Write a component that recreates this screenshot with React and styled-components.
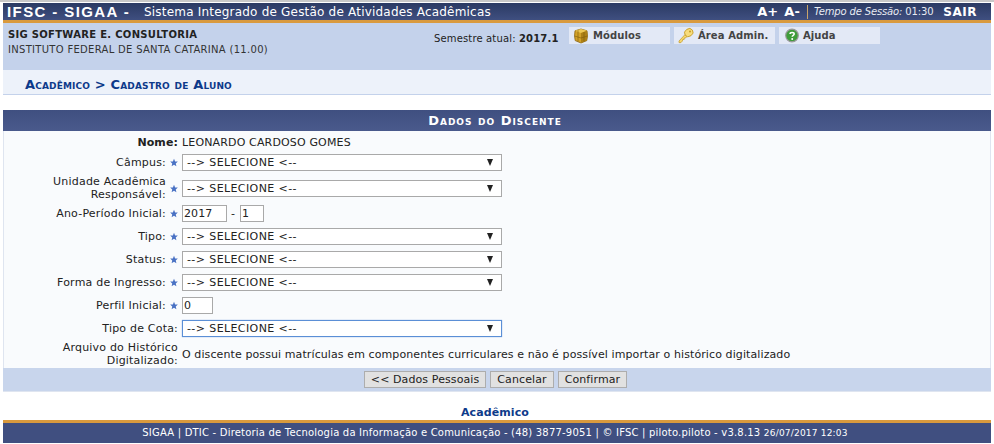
import React from "react";
import styled, { createGlobalStyle } from "styled-components";

const GlobalStyle = createGlobalStyle`
  html, body {
    margin: 0;
    padding: 0;
    background: #fff;
  }
  body {
    font-family: "DejaVu Sans", Verdana, sans-serif;
    font-size: 11px;
    letter-spacing: 0.1px;
    color: #222;
  }
`;

function CubeIcon() {
  return (
    <svg width="16" height="16" viewBox="0 0 16 16">
      <path d="M8 1 L14 2.8 Q15 8 13.8 12.6 L8 15 L2.2 12.6 Q1 8 2 2.8 Z" fill="#d2a128" stroke="#8a6510" strokeWidth="0.8" />
      <path d="M2 2.8 L8 5 L14 2.8 L8 1 Z" fill="#ecc755" />
      <path d="M8 5 V15 L13.8 12.6 Q15 8 14 2.8 Z" fill="#ad8016" />
      <path d="M5 2.2 V13.4 M1.6 8 L8 10 L14.4 8 M11 4 V13.6" stroke="#7d5a0c" strokeWidth="0.6" fill="none" />
    </svg>
  );
}

function KeyIcon() {
  return (
    <svg width="16" height="17" viewBox="0 0 16 17">
      <path d="M1 14 L7 7.6 L9 9.4 L7.6 11 L6.2 11 L6.2 12.4 L4.6 12.6 L4.4 14 L3 15.6 L1 15.6 Z" fill="#f5d76e" stroke="#c49a25" strokeWidth="0.7" />
      <ellipse cx="10.8" cy="5.6" rx="4.4" ry="3.8" transform="rotate(-35 10.8 5.6)" fill="#f7dc7c" stroke="#c49a25" strokeWidth="0.8" />
      <circle cx="12" cy="4.4" r="1" fill="#c49a25" />
    </svg>
  );
}

function HelpIcon() {
  return (
    <svg width="14" height="15" viewBox="0 0 14 15">
      <circle cx="7" cy="7.5" r="6.3" fill="#3f9d3a" stroke="#9a9a9a" strokeWidth="1.2" />
      <path d="M5 6 C5 3.9 9.2 3.9 9.2 6 C9.2 7.4 7.2 7.4 7.2 8.8" fill="none" stroke="#fff" strokeWidth="1.5" />
      <circle cx="7.2" cy="10.9" r="1" fill="#fff" />
    </svg>
  );
}

function RequiredStar() {
  return (
    <svg width="9" height="9" viewBox="0 0 10 10">
      <path d="M5 0.3 L6.4 3.6 L9.8 3.9 L7.2 6.2 L8 9.7 L5 7.8 L2 9.7 L2.8 6.2 L0.2 3.9 L3.6 3.6 Z" fill="#4a72c4" />
    </svg>
  );
}

function Combo({ focused }) {
  return (
    <Select $focused={focused}>
      <span>--&gt; SELECIONE &lt;--</span>
      <Caret />
    </Select>
  );
}

function Row({ label, required = true, height = 23, children }) {
  return (
    <FormRow $height={height}>
      <RowLabel $wide={!required}>{label}</RowLabel>
      {required && (
        <StarCell>
          <RequiredStar />
        </StarCell>
      )}
      <RowField>{children}</RowField>
    </FormRow>
  );
}

export default function App() {
  return (
    <Page>
      <GlobalStyle />
      <TopBar>
        <Brand>IFSC - SIGAA -</Brand>
        <SystemName>Sistema Integrado de Gestão de Atividades Acadêmicas</SystemName>
        <TopRight>
          <FontSizer>A+</FontSizer>
          <FontSizer $last>A-</FontSizer>
          <Session>
            <em>Tempo de Sessão:</em> 01:30
          </Session>
          <Logout>SAIR</Logout>
        </TopRight>
      </TopBar>

      <InfoBand>
        <Institution>
          <strong>SIG SOFTWARE E. CONSULTORIA</strong>
          <span>INSTITUTO FEDERAL DE SANTA CATARINA (11.00)</span>
        </Institution>
        <Semester>
          Semestre atual: <b>2017.1</b>
        </Semester>
        <MenuButton>
          <CubeIcon />
          Módulos
        </MenuButton>
        <MenuButton>
          <KeyIcon />
          Área Admin.
        </MenuButton>
        <MenuButton $inset={6}>
          <HelpIcon />
          Ajuda
        </MenuButton>
      </InfoBand>

      <Breadcrumb>Acadêmico &gt; Cadastro de Aluno</Breadcrumb>

      <Panel>
        <PanelTitle>Dados do Discente</PanelTitle>
        <FormBody>
          <NameRow>
            <b>Nome:</b>
            <span>LEONARDO CARDOSO GOMES</span>
          </NameRow>
          <Row label="Câmpus:">
            <Combo />
          </Row>
          <Row label={<>Unidade Acadêmica<br />Responsável:</>} height={28}>
            <Combo />
          </Row>
          <Row label="Ano-Período Inicial:">
            <YearInput as="div" $width={45}>2017</YearInput>
            <Dash>-</Dash>
            <YearInput as="div" $width={24}>1</YearInput>
          </Row>
          <Row label="Tipo:">
            <Combo />
          </Row>
          <Row label="Status:">
            <Combo />
          </Row>
          <Row label="Forma de Ingresso:">
            <Combo />
          </Row>
          <Row label="Perfil Inicial:">
            <YearInput as="div" $width={31}>0</YearInput>
          </Row>
          <Row label="Tipo de Cota:" required={false}>
            <Combo focused />
          </Row>
          <Row
            label={<>Arquivo do Histórico<br />Digitalizado:</>}
            required={false}
            height={28}
          >
            <Notice>
              O discente possui matrículas em componentes curriculares e não é possível importar o histórico digitalizado
            </Notice>
          </Row>
        </FormBody>
        <Actions>
          <ActionButton>&lt;&lt; Dados Pessoais</ActionButton>
          <ActionButton>Cancelar</ActionButton>
          <ActionButton>Confirmar</ActionButton>
        </Actions>
      </Panel>

      <ModuleName>Acadêmico</ModuleName>
      <Footer>
        SIGAA | DTIC - Diretoria de Tecnologia da Informação e Comunicação - (48) 3877-9051 | © IFSC | piloto.piloto - v3.8.13 <small>26/07/2017 12:03</small>
      </Footer>
    </Page>
  );
}

const Page = styled.div`
  width: 988px;
  margin: 0 auto;
  padding-top: 3px;
  position: relative;
  &::before {
    content: "";
    position: absolute;
    top: 0;
    left: -3px;
    right: -3px;
    height: 2px;
    background: #c8c8c8;
  }
`;

const TopBar = styled.div`
  height: 17px;
  display: flex;
  align-items: center;
  padding-left: 4px;
  background: linear-gradient(#2b3a63, #3f4f80);
  color: #fff;
  border-bottom: 3px solid #d99a3e;
`;

const Brand = styled.div`
  font-family: "Liberation Sans", Arial, sans-serif;
  font-size: 15px;
  font-weight: bold;
  letter-spacing: 1.4px;
  width: 137px;
`;

const SystemName = styled.div`
  font-size: 12px;
  letter-spacing: 0.2px;
`;

const TopRight = styled.div`
  margin-left: auto;
  display: flex;
  align-items: center;
  padding-right: 14px;
`;

const FontSizer = styled.span`
  font-weight: bold;
  font-size: 13px;
  margin-right: ${(p) => (p.$last ? 7 : 6)}px;
`;

const Session = styled.span`
  font-size: 10px;
  letter-spacing: -0.15px;
  border-left: 1px solid #c9a46a;
  padding-left: 6px;
  height: 14px;
  line-height: 14px;
  margin-right: 10px;
  color: #e8ebf2;
`;

const Logout = styled.span`
  font-weight: bold;
  font-size: 12px;
  letter-spacing: 0.5px;
`;

const InfoBand = styled.div`
  height: 47px;
  background: #c4d2eb;
  display: flex;
  align-items: flex-start;
`;

const Institution = styled.div`
  width: 426px;
  padding: 6px 0 0 5px;
  display: flex;
  flex-direction: column;
  gap: 3px;
  font-size: 10px;
  line-height: 12px;
  letter-spacing: 0.3px;
  color: #333;
  strong {
    color: #222;
  }
`;

const Semester = styled.div`
  width: 135px;
  padding-top: 9px;
  font-size: 10px;
  line-height: 13px;
  letter-spacing: 0.15px;
  color: #222;
`;

const MenuButton = styled.div`
  width: 101px;
  height: 17px;
  margin: 4px 4px 0 0;
  padding-left: ${(p) => p.$inset || 4}px;
  box-sizing: border-box;
  background: #e3e9f6;
  display: flex;
  align-items: center;
  gap: 4px;
  white-space: nowrap;
  font-size: 10px;
  font-weight: bold;
  color: #444;
`;

const Breadcrumb = styled.div`
  height: 20px;
  padding: 4px 0 0 22px;
  background: #edf2fa;
  border-bottom: 1px solid #c4d2eb;
  display: flex;
  align-items: center;
  font-variant: small-caps;
  font-weight: bold;
  font-size: 13px;
  letter-spacing: 0.15px;
  color: #0d3a8a;
`;

const Panel = styled.div`
  margin-top: 15px;
  border-bottom: 1px solid #dfe5f0;
`;

const PanelTitle = styled.div`
  height: 21px;
  line-height: 21px;
  padding-right: 4px;
  text-align: center;
  background: linear-gradient(#3f4f80, #4a5a8c);
  color: #fff;
  font-variant: small-caps;
  font-weight: bold;
  font-size: 13px;
  letter-spacing: 1px;
`;

const FormBody = styled.div`
  background: #f9fbfd;
  border-left: 1px solid #dfe5f0;
  border-right: 1px solid #dfe5f0;
  padding-top: 2px;
`;

const NameRow = styled.div`
  height: 18px;
  display: grid;
  grid-template-columns: 174px 1fr;
  column-gap: 4px;
  align-items: center;
  b {
    text-align: right;
  }
  span {
    letter-spacing: 0.15px;
  }
`;

const FormRow = styled.div`
  height: ${(p) => p.$height}px;
  display: flex;
  align-items: center;
`;

const RowLabel = styled.div`
  width: ${(p) => (p.$wide ? 174 : 162)}px;
  flex-shrink: 0;
  text-align: right;
  line-height: 13px;
  letter-spacing: 0.2px;
  color: #222;
`;

const StarCell = styled.div`
  width: 12px;
  padding-left: 4px;
  box-sizing: border-box;
  display: flex;
  align-items: center;
`;

const RowField = styled.div`
  margin-left: 4px;
  display: flex;
  align-items: center;
`;

const Select = styled.div`
  width: 320px;
  height: 17px;
  box-sizing: border-box;
  background: #fff;
  border: 1px solid ${(p) => (p.$focused ? "#5b8fd6" : "#a9a9a9")};
  box-shadow: ${(p) => (p.$focused ? "0 0 1px 0 #7fa8e0" : "none")};
  display: flex;
  align-items: center;
  justify-content: space-between;
  padding: 0 8px 0 4px;
  letter-spacing: 0.4px;
  color: #222;
`;

const Caret = styled.i`
  width: 0;
  height: 0;
  border-left: 3.5px solid transparent;
  border-right: 3.5px solid transparent;
  border-top: 7px solid #222;
`;

const YearInput = styled.input`
  width: ${(p) => p.$width}px;
  height: 17px;
  box-sizing: border-box;
  background: #fff;
  border: 1px solid #a9a9a9;
  padding: 0 1px;
  line-height: 15px;
  color: #222;
`;

const Dash = styled.span`
  margin: 0 5px 0 4px;
`;

const Notice = styled.div`
  white-space: nowrap;
`;

const Actions = styled.div`
  height: 23px;
  background: #c8d5ec;
  display: flex;
  justify-content: center;
  align-items: center;
  gap: 4px;
  padding-right: 3px;
`;

const ActionButton = styled.div`
  height: 17px;
  box-sizing: border-box;
  line-height: 15px;
  padding: 0 6px;
  background: #e1e1e1;
  border: 1px solid #adadad;
  color: #222;
`;

const ModuleName = styled.div`
  margin-top: 14px;
  padding-right: 4px;
  height: 14px;
  line-height: 14px;
  text-align: center;
  font-weight: bold;
  color: #0d3a8a;
`;

const Footer = styled.div`
  height: 20px;
  line-height: 20px;
  padding-right: 4px;
  text-align: center;
  background: #404f80;
  border-top: 3px solid #d99a3e;
  color: #fff;
  font-size: 10px;
  letter-spacing: 0.2px;
  small {
    font-size: 9px;
  }
`;
